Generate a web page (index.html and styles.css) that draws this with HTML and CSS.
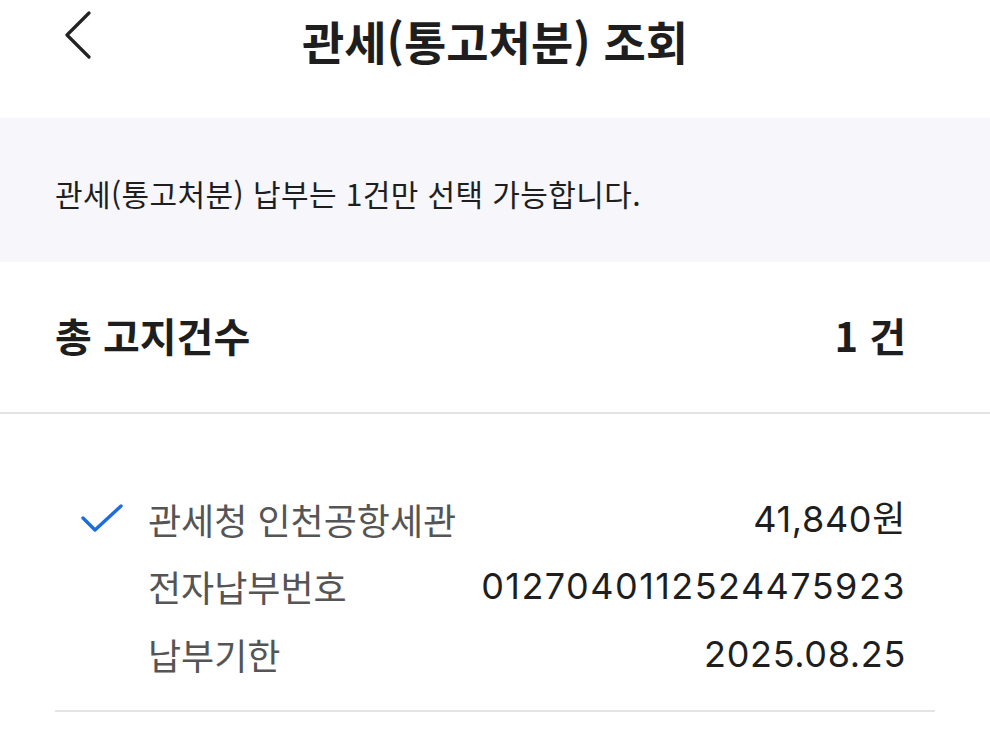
FILE: index.html
```html
<!DOCTYPE html>
<html lang="ko">
<head>
<meta charset="utf-8">
<link rel="stylesheet" href="styles.css">
</head>
<body>
<div class="page">
  <header class="topbar">
    <span class="back" aria-label="뒤로">
      <svg width="30" height="48" viewBox="0 0 30 48"><path d="M26 2 L4 24 L26 46" fill="none" stroke="#222" stroke-width="3.2" stroke-linecap="round" stroke-linejoin="round"/></svg>
    </span>
    <h1 class="title">관세(통고처분) 조회</h1>
  </header>
  <section class="notice">
    <p class="notice-text">관세(통고처분) 납부는 1건만 선택 가능합니다.</p>
  </section>
  <section class="total">
    <span class="total-label">총 고지건수</span>
    <span class="total-value">1 건</span>
  </section>
  <section class="item">
    <div class="item-row">
      <span class="check">
        <svg width="44" height="32" viewBox="0 0 44 32"><path d="M3 15 L15 27 L41 3" fill="none" stroke="#1b6ee0" stroke-width="3.4" stroke-linecap="round" stroke-linejoin="round"/></svg>
      </span>
      <span class="label">관세청 인천공항세관</span>
      <span class="value">41,840원</span>
    </div>
    <div class="item-row">
      <span class="check"></span>
      <span class="label">전자납부번호</span>
      <span class="value value-code">0127040112524475923</span>
    </div>
    <div class="item-row">
      <span class="check"></span>
      <span class="label">납부기한</span>
      <span class="value">2025.08.25</span>
    </div>
  </section>
</div>
</body>
</html>
```
FILE: styles.css
```css
* { box-sizing: border-box; }
html, body { margin: 0; padding: 0; background: #fff; }
body {
  font-family: "Noto Sans CJK KR", "Noto Sans", sans-serif;
  color: #222;
  width: 990px;
  height: 750px;
  overflow: hidden;
}
.page { display: flex; flex-direction: column; }
.topbar {
  position: relative;
  height: 118px;
  display: flex;
  justify-content: center;
  padding-top: 8px;
}
.back {
  position: absolute;
  left: 63px;
  top: 11px;
  display: block;
}
.back svg { display: block; }
.title {
  margin: 0;
  font-size: 46px;
  font-weight: 700;
  line-height: 64px;
  color: #1e1e1e;
  letter-spacing: 0;
}
.notice {
  background: #f6f6fb;
  height: 144px;
  display: flex;
  align-items: center;
  padding: 6px 55px 0;
}
.notice-text {
  margin: 0;
  font-size: 30px;
  line-height: 40px;
  color: #1e1e1e;
  letter-spacing: 0.4px;
}
.total {
  height: 152px;
  display: flex;
  align-items: center;
  justify-content: space-between;
  padding: 0 84px 4px 55px;
  border-bottom: 2px solid #e4e4e6;
  font-size: 40px;
  line-height: 50px;
  font-weight: 700;
  color: #1e1e1e;
}
.total-value { letter-spacing: 0; }
.item {
  margin: 0 55px;
  padding: 71px 29px 22px 25px;
  border-bottom: 2px solid #e4e4e6;
  display: flex;
  flex-direction: column;
}
.item-row {
  display: flex;
  align-items: center;
  height: 67.5px;
}
.check { width: 68px; flex: none; display: flex; align-items: center; }
.check svg { display: block; }
.label {
  font-size: 36px;
  line-height: 46px;
  color: #555;
  letter-spacing: 0;
  flex: 1;
}
.value {
  font-family: "Inter", "Noto Sans CJK KR", sans-serif;
  font-size: 36px;
  line-height: 46px;
  color: #1e1e1e;
  letter-spacing: 0.65px;
}
.value-code { letter-spacing: 1.45px; }
```
